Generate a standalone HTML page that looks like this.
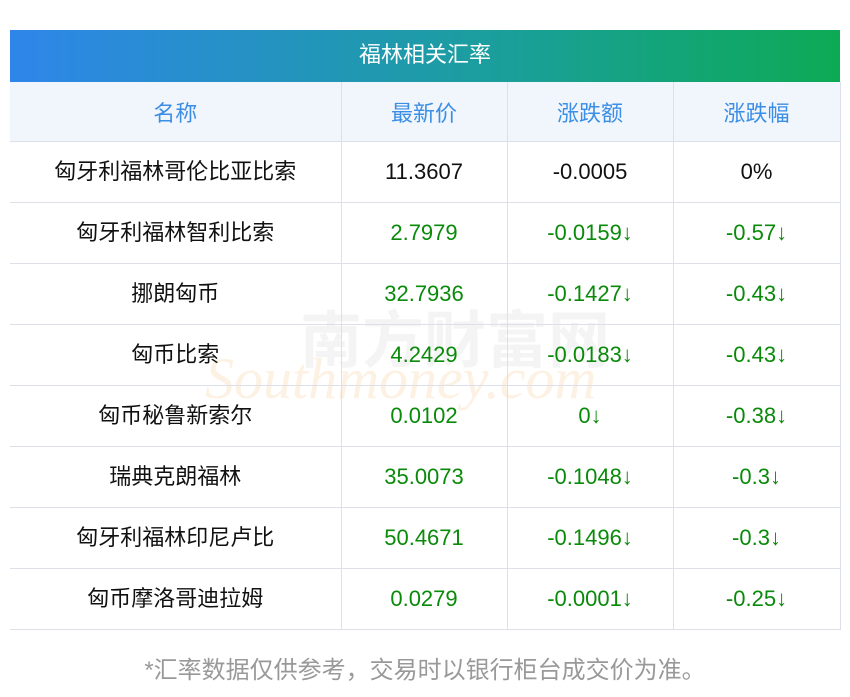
<!DOCTYPE html>
<html><head><meta charset="utf-8"><style>
body{margin:0;width:850px;height:697px;background:#fff;font-family:"Liberation Sans","Noto Sans CJK SC",sans-serif;position:relative;overflow:hidden}
.title{position:absolute;left:10px;top:30px;width:830px;height:52px;background:linear-gradient(90deg,#2f86ea,#1a9f9a 60%,#0daa55);color:#fff;font-size:22px;text-align:center;line-height:50px}
table{position:absolute;left:10px;top:82px;border-collapse:collapse;width:830px;table-layout:fixed}
td{height:60px;border:1px solid #dde0ea;text-align:center;font-size:22px;color:#111;padding:0;line-height:22px}
tr td:first-child{border-left:none}
th{height:59px;background:#f1f6fd;color:#3b8ee6;font-weight:normal;font-size:22px;border:1px solid #dde0ea;border-top:none;border-left:none;padding:0}
.g{color:#0a8a0a}
.foot{position:absolute;left:0;width:850px;top:650px;text-align:center;color:#999;font-size:24px}
.wm{position:absolute;color:rgba(200,200,200,0.2);font-family:"Liberation Serif",serif;font-style:italic}
</style></head><body>
<div class="title">福林相关汇率</div>
<div class="wm" style="left:300px;top:290px;font-size:62px;font-style:normal;font-family:'Noto Sans CJK SC',sans-serif;font-weight:bold">南方财富网</div>
<div class="wm" style="left:205px;top:345px;font-size:58px;color:rgba(245,200,140,0.25)">Southmoney.com</div>
<table>
<colgroup><col style="width:331px"><col style="width:166px"><col style="width:166px"><col style="width:167px"></colgroup>
<tr><th>名称</th><th>最新价</th><th>涨跌额</th><th>涨跌幅</th></tr>
<tr><td>匈牙利福林哥伦比亚比索</td><td>11.3607</td><td>-0.0005</td><td>0%</td></tr>
<tr><td>匈牙利福林智利比索</td><td class="g">2.7979</td><td class="g">-0.0159↓</td><td class="g">-0.57↓</td></tr>
<tr><td>挪朗匈币</td><td class="g">32.7936</td><td class="g">-0.1427↓</td><td class="g">-0.43↓</td></tr>
<tr><td>匈币比索</td><td class="g">4.2429</td><td class="g">-0.0183↓</td><td class="g">-0.43↓</td></tr>
<tr><td>匈币秘鲁新索尔</td><td class="g">0.0102</td><td class="g">0↓</td><td class="g">-0.38↓</td></tr>
<tr><td>瑞典克朗福林</td><td class="g">35.0073</td><td class="g">-0.1048↓</td><td class="g">-0.3↓</td></tr>
<tr><td>匈牙利福林印尼卢比</td><td class="g">50.4671</td><td class="g">-0.1496↓</td><td class="g">-0.3↓</td></tr>
<tr><td>匈币摩洛哥迪拉姆</td><td class="g">0.0279</td><td class="g">-0.0001↓</td><td class="g">-0.25↓</td></tr>
</table>
<div class="foot">*汇率数据仅供参考，交易时以银行柜台成交价为准。</div>
</body></html>
